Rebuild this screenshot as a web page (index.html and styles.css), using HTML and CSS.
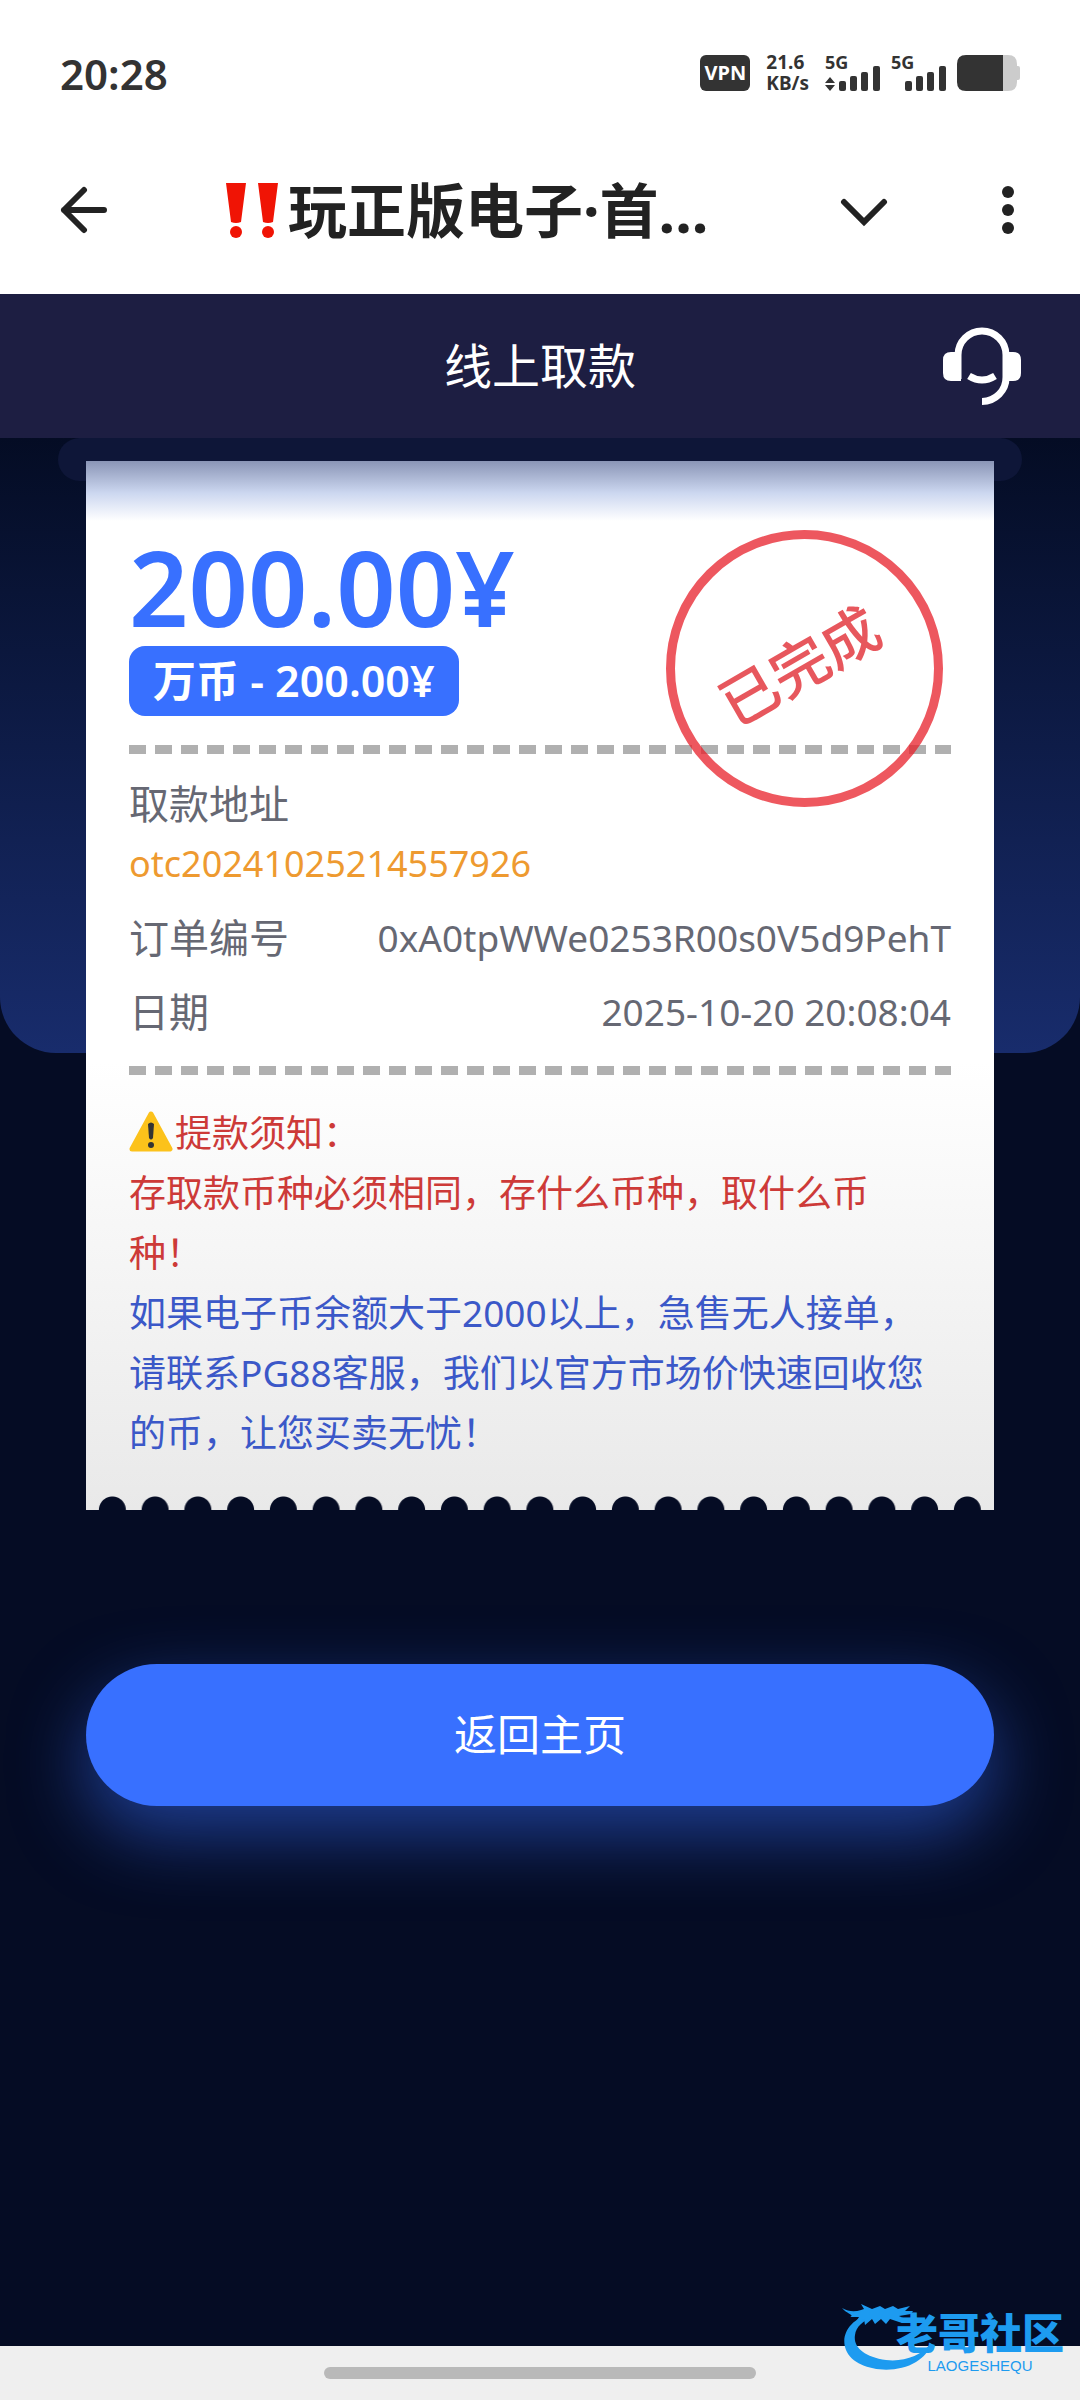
FILE: index.html
```html
<!DOCTYPE html>
<html lang="zh-CN">
<head>
  <meta charset="UTF-8" />
  <meta name="viewport" content="width=device-width, initial-scale=1.0"/>
  <title>线上取款</title>
  <link rel="stylesheet" href="styles.css">
</head>
<body>
  <div class="status-bar">
    <span class="time">20:28</span>
    <div class="status-icons">
      <span class="vpn">VPN</span>
      <div class="speed">
        <span>21.6</span>
        <span>KB/s</span>
      </div>
      <div class="signal">
        <span class="network">5G</span>
        <svg width="56" height="38" viewBox="0 0 56 38" fill="#333">
          <path d="M5 23l5 6H0zM5 37l5-6H0z"/>
          <rect x="14" y="27" width="7" height="10" rx="2"/>
          <rect x="25" y="22" width="7" height="15" rx="2"/>
          <rect x="36" y="18" width="7" height="19" rx="2"/>
          <rect x="48" y="12" width="7" height="25" rx="2"/>
        </svg>
      </div>
      <div class="signal">
        <span class="network">5G</span>
        <svg width="56" height="38" viewBox="0 0 56 38" fill="#333">
          <rect x="14" y="27" width="7" height="10" rx="2"/>
          <rect x="25" y="22" width="7" height="15" rx="2"/>
          <rect x="36" y="18" width="7" height="19" rx="2"/>
          <rect x="48" y="12" width="7" height="25" rx="2"/>
        </svg>
      </div>
      <svg width="63" height="36" viewBox="0 0 63 36">
        <path d="M46 0h5q9 0 9 9v2h1q2 0 2 2v10q0 2-2 2h-1v2q0 9-9 9h-5z" fill="#ccc"/>
        <path d="M9 0h37v36H9q-9 0-9-9V9q0-9 9-9z" fill="#333"/>
      </svg>
    </div>
  </div>

  <nav class="app-bar">
    <button class="icon-button" type="button" aria-label="返回">
      <svg width="48" height="48" viewBox="0 0 48 48" fill="none" stroke="#222" stroke-width="6" stroke-linecap="round" stroke-linejoin="round">
        <path d="M44 24H4M24 4L4 24l20 20"/>
      </svg>
    </button>
    <div class="page-name">
      <svg class="double-mark" width="60" height="60" viewBox="0 0 60 60" fill="#f01405">
        <path d="M3 3h20l-5 39q-5 2-10 0zM35 3h20l-5 39q-5 2-10 0z"/>
        <circle cx="13" cy="52" r="6"/>
        <circle cx="45" cy="52" r="6"/>
      </svg>
      <span>玩正版电子·首...</span>
    </div>
    <button class="icon-button" type="button" aria-label="展开">
      <svg width="48" height="48" viewBox="0 0 48 48" fill="none" stroke="#222" stroke-width="6" stroke-linecap="round" stroke-linejoin="miter">
        <path d="M4 16l20 20 20-20"/>
      </svg>
    </button>
    <button class="icon-button more" type="button" aria-label="更多">
      <svg width="12" height="48" viewBox="0 0 12 48" fill="#222">
        <circle cx="6" cy="6" r="6"/>
        <circle cx="6" cy="24" r="6"/>
        <circle cx="6" cy="42" r="6"/>
      </svg>
    </button>
  </nav>

  <header class="header">
    <h1>线上取款</h1>
    <button class="icon-button service" type="button" aria-label="客服">
      <svg width="79" height="79" viewBox="0 0 79 79" fill="none" stroke="#fff">
        <path d="M15 52V28a24 24 0 0 1 48 0v22a24 24 0 0 1-24 24.500" stroke-width="7"/>
        <path d="M8 25h10v29H8q-8 0-8-8V33q0-8 8-8zM70 25H60v29h10q8 0 8-8V33q0-8-8-8z" fill="#fff" stroke="none"/>
        <path d="M26 49q13 8 26 0" stroke-width="7"/>
      </svg>
    </button>
  </header>

  <main class="content">
    <section class="receipt">
      <div class="amount">200.00¥</div>
      <div class="chip">万币 - 200.00¥</div>
      <div class="stamp"><span>已完成</span></div>
      <div class="dashes"></div>
      <dl class="details">
        <div class="address">
          <dt>取款地址</dt>
          <dd>otc20241025214557926</dd>
        </div>
        <div class="row">
          <dt>订单编号</dt>
          <dd>0xA0tpWWe0253R00s0V5d9PehT</dd>
        </div>
        <div class="row">
          <dt>日期</dt>
          <dd>2025-10-20 20:08:04</dd>
        </div>
      </dl>
      <div class="dashes"></div>
      <div class="notice">
        <p class="warning"><svg class="warning-icon" width="44" height="42" viewBox="0 0 44 42">
            <path d="M22 3L41 38H3z" fill="#fcc21b" stroke="#fcc21b" stroke-width="5" stroke-linejoin="round"/>
            <path d="M19 13q3-3 6 0l-1 14q-2 3-4 0z" fill="#333"/>
            <circle cx="22" cy="34" r="3" fill="#333"/>
          </svg>提款须知：</p>
        <p class="warning">存取款币种必须相同，存什么币种，取什么币种！</p>
        <p class="info">如果电子币余额大于2000以上，急售无人接单，请联系PG88客服，我们以官方市场价快速回收您的币，让您买卖无忧！</p>
      </div>
      <div class="scallops"></div>
    </section>
    <button class="home-button" type="button">返回主页</button>
  </main>

  <footer class="gesture-bar">
    <div class="handle"></div>
  </footer>

  <div class="watermark">
    <svg width="94" height="78" viewBox="0 0 94 78" fill="#1d9bf0">
      <path d="M30 17C8 23-2 39 4 54c8 20 47 26 70 12 8-5 13-11 15-19-10 13-27 19-45 17C22 61 11 51 13 39c1-8 8-15 19-18z"/>
      <path d="M0 12c7 4 13 4 19 2l3-1-3-5 11 5 8-3 5 3 8-3 5 3 12-3-5 5 8 0-2 3-12 2 8 4-5 3-12-4-4 5-5-5-6 5-3-5-7 6-1-6-8 3 3-5-9 0C13 19 5 18 0 12z"/>
    </svg>
    <div class="watermark-text">
      <strong>老哥社区</strong>
      <small>LAOGESHEQU</small>
    </div>
  </div>
</body>
</html>
```
FILE: styles.css
```css
* { box-sizing: border-box; }
body {
  margin: 0;
  position: relative;
  min-height: 100vh;
  display: flex;
  flex-direction: column;
  font-family: "Noto Sans", "Noto Sans CJK SC", sans-serif;
  background-color: #050c24;
}
svg { display: block; }
button { font-family: inherit; }

.icon-button {
  padding: 0;
  border: none;
  background: none;
  cursor: pointer;
}

/* status bar */
.status-bar {
  height: 126px;
  padding: 20px 60px 0 60px;
  display: flex;
  justify-content: space-between;
  align-items: center;
  background-color: #fff;
  color: #333;
}
.time {
  font-size: 42px;
  font-weight: 600;
}
.status-icons {
  display: flex;
  align-items: center;
  gap: 10px;
}
.vpn {
  width: 50px;
  height: 36px;
  margin-right: 6px;
  border-radius: 6px;
  background-color: #333;
  color: #fff;
  font-size: 20px;
  font-weight: bold;
  line-height: 36px;
  text-align: center;
}
.speed {
  display: flex;
  flex-direction: column;
  margin-right: 6px;
  font-size: 19px;
  font-weight: bold;
  line-height: 21px;
}
.signal { position: relative; }
.network {
  position: absolute;
  top: 0;
  left: 0;
  font-size: 18px;
  font-weight: bold;
  line-height: 16px;
}

/* app bar */
.app-bar {
  height: 168px;
  padding: 0 60px;
  display: flex;
  align-items: center;
  background-color: #fff;
}
.page-name {
  flex: 1;
  display: flex;
  align-items: center;
  margin-left: 115px;
  color: #222;
  font-size: 59px;
  font-weight: bold;
  line-height: 84px;
  white-space: nowrap;
}
.double-mark { margin-right: 5px; }
.more { margin: 0 6px 0 114px; }

.header {
  position: relative;
  height: 144px;
  padding-bottom: 6px;
  display: flex;
  align-items: center;
  justify-content: center;
  background-color: #1d1e42;
}
.header h1 {
  margin: 0;
  color: #fff;
  font-size: 48px;
  font-weight: normal;
}
.service {
  position: absolute;
  top: 33px;
  right: 58px;
}

/* content */
.content {
  position: relative;
  z-index: 0;
  flex: 1;
  padding: 23px 86px 0;
}
.content::before {
  content: "";
  position: absolute;
  z-index: -1;
  top: 0; left: 0; right: 0;
  height: 615px;
  border-radius: 0 0 56px 56px;
  background: linear-gradient(#040c24, #182c6c);
}
.content::after {
  content: "";
  position: absolute;
  z-index: -1;
  top: 0; left: 58px; right: 58px;
  height: 43px;
  border-radius: 22px;
  background-color: #0e1638;
}

.receipt {
  position: relative;
  padding: 76px 43px 0;
  background: linear-gradient(#8a95b6 0, #ccd7f0 32px, #fff 60px, #fff 600px, #e9e9e9 100%);
}
.amount {
  margin-bottom: 9px;
  color: #3870ff;
  font-size: 104px;
  font-weight: 600;
  line-height: 100px;
}
.chip {
  width: fit-content;
  margin-bottom: 29px;
  padding: 0 24px;
  border-radius: 16px;
  background-color: #3870ff;
  color: #fff;
  font-size: 43px;
  font-weight: 600;
  line-height: 70px;
}
.stamp {
  position: absolute;
  top: 69px;
  right: 51px;
  width: 277px;
  height: 277px;
  padding: 0 12px 12px 0;
  display: flex;
  align-items: center;
  justify-content: center;
  border: 9px solid #e8202a;
  border-radius: 50%;
  color: #e02028;
  font-size: 58px;
  font-weight: 500;
  opacity: 0.75;
}
.stamp span { transform: rotate(-30deg); }
.dashes {
  height: 9px;
  background: repeating-linear-gradient(to right, #b0b0b0 0 17px, transparent 17px 26px);
}

.details {
  margin: 0;
  padding: 20px 0 24px;
  display: flex;
  flex-direction: column;
  gap: 14px;
  color: #666873;
  line-height: 60px;
}
.row {
  display: flex;
  justify-content: space-between;
}
.details dt { font-size: 40px; }
.details dd {
  margin: 0;
  font-size: 37px;
}
.details .address dd {
  color: #ee9a30;
  font-size: 36px;
}

.notice {
  padding: 28px 14px 33px 0;
  font-size: 37px;
  line-height: 60px;
}
.notice p { margin: 0; }
.warning { color: #cd3a38; }
.info { color: #3b58c8; }
.warning-icon {
  display: inline-block;
  margin-right: 2px;
  vertical-align: -6px;
}

/* torn edge */
.scallops {
  height: 14px;
  margin: 0 -38px;
  background: radial-gradient(circle at 50% 100%, #050c24 13px, transparent 14px) 0 0 / 43px 14px round;
}

.home-button {
  display: block;
  width: 100%;
  height: 142px;
  margin-top: 154px;
  padding-bottom: 6px;
  border: none;
  border-radius: 71px;
  background-color: #3870ff;
  box-shadow: 0 28px 72px rgba(56, 112, 255, 0.5);
  color: #fff;
  font-size: 43px;
  cursor: pointer;
}

.gesture-bar {
  height: 54px;
  display: flex;
  align-items: center;
  justify-content: center;
  background-color: #efefef;
}
.handle {
  width: 40%;
  height: 12px;
  border-radius: 6px;
  background-color: #b9b9b9;
}

.watermark {
  position: absolute;
  right: 16px;
  bottom: 26px;
  display: flex;
  align-items: flex-end;
  color: #1d9bf0;
}
.watermark-text {
  margin-left: -40px;
  display: flex;
  flex-direction: column;
  align-items: center;
}
.watermark strong {
  font-size: 42px;
  font-weight: 900;
  line-height: 50px;
}
.watermark small {
  font-family: "Liberation Sans", sans-serif;
  font-size: 15px;
  line-height: 16px;
}
```
